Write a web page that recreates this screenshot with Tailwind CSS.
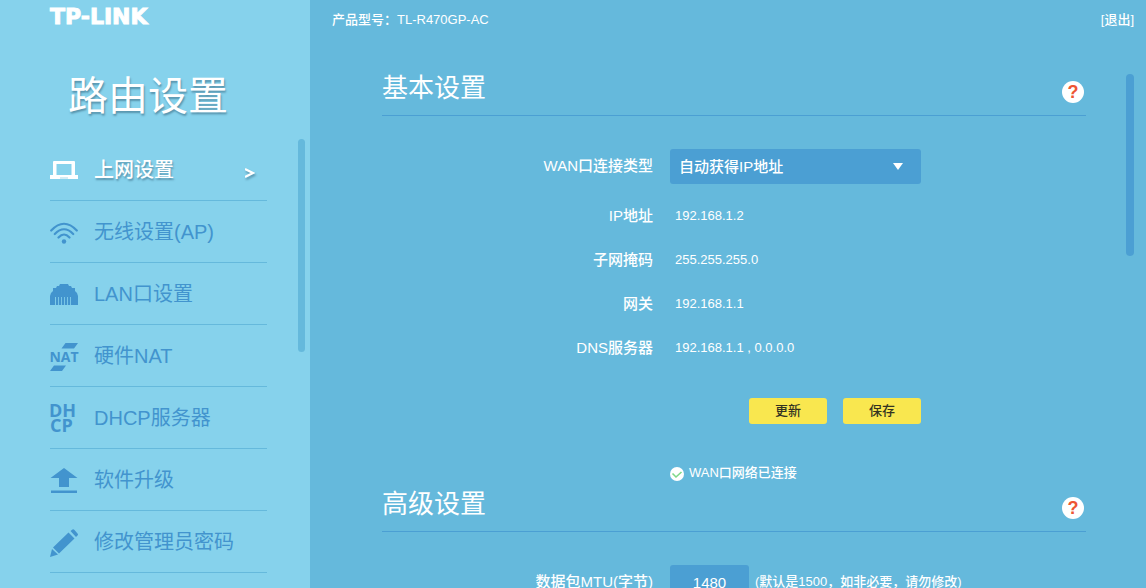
<!DOCTYPE html>
<html lang="zh-CN">
<head>
<meta charset="utf-8">
<meta name="viewport" content="width=device-width, initial-scale=1">
<title>路由设置</title>
<script src="https://cdn.jsdelivr.net/npm/@tailwindcss/browser@4"></script>
</head>
<body class="flex h-screen overflow-hidden bg-[#65b9dc] font-['Liberation_Sans','Noto_Sans_CJK_SC',sans-serif] text-white">

<aside class="relative w-[310px] shrink-0 overflow-hidden bg-[#86d2ec] pr-[43px] pl-[50px]">
  <div class="pt-1 font-['DejaVu_Sans'] text-[22px] leading-[26px] font-bold [-webkit-text-stroke:1px_white]">TP-LINK</div>
  <h1 class="pt-9 pb-[13px] pl-[18px] text-[40px] leading-[60px] [text-shadow:1px_2px_2px_#5793ac]">路由设置</h1>
  <nav class="text-[20px] leading-[30px] text-[#4294ce]" aria-label="路由设置">
    <a href="#" class="flex h-[62px] items-center border-b border-[#65b9dc] font-medium text-white [text-shadow:1px_2px_2px_#5793ac]" aria-current="page">
      <svg class="mt-1 mr-4 size-7" viewBox="0 0 28 28" aria-hidden="true"><path fill="white" fill-rule="evenodd" d="M4 3h20q1 0 1 1v13h3v4H0v-4h3V4q0-1 1-1zM6.500 6v11h15V6z"/><path d="M10 19.500h8v1h-8z" fill="#a8d8ea"/></svg>
      <span class="grow">上网设置</span>
      <svg class="mt-[6px] mr-3 h-3 w-[10px] drop-shadow-[1px_2px_1px_#5793ac]" viewBox="0 0 10 12" aria-hidden="true"><path d="M0 2l8 4-8 4" fill="none" stroke="white" stroke-width="2.200"/></svg>
    </a>
    <a href="#" class="flex h-[62px] items-center border-b border-[#65b9dc]">
      <svg class="mt-1 mr-4 size-7" viewBox="0 0 28 28" aria-hidden="true" fill="none" stroke="#4294ce" stroke-width="2.200" stroke-linecap="round"><path d="M1.200 10.500Q14 -3 26.800 10.500M4.800 14Q14 4.500 23.200 14M8.500 17.500Q14 11.500 19.500 17.500"/><circle cx="14" cy="21.500" r="2.200" fill="#4294ce" stroke="none"/></svg>
      <span>无线设置(AP)</span>
    </a>
    <a href="#" class="flex h-[62px] items-center border-b border-[#65b9dc]">
      <svg class="mt-1 mr-4 size-7" viewBox="0 0 28 28" aria-hidden="true"><path fill="#4294ce" d="M10 2h8l1 2h2l1 2h3v3l2 2 1 3v9h-5v-8H5v8H0v-9l1-3 2-2V6h3l1-2h2z"/><path stroke="#4294ce" stroke-width="2.200" d="M7 14v9M10 14v9M13 14v9M16 14v9M19 14v9M22 14v9"/></svg>
      <span>LAN口设置</span>
    </a>
    <a href="#" class="flex h-[62px] items-center border-b border-[#65b9dc]">
      <svg class="mt-[2px] mr-4 size-7 overflow-visible" viewBox="0 0 28 28" aria-hidden="true" fill="#4294ce"><path d="M15.500 0H28l-4 5.500H11.500zM4 22.500h12L12 28H0z"/><text x="14" y="19" text-anchor="middle" font-family="Open Sans" font-weight="700" font-size="14">NAT</text></svg>
      <span>硬件NAT</span>
    </a>
    <a href="#" class="flex h-[62px] items-center border-b border-[#65b9dc]">
      <svg class="mr-4 size-7 overflow-visible" viewBox="0 0 28 28" aria-hidden="true" fill="#4294ce"><text font-family="Open Sans" font-weight="700" font-size="18"><tspan x="-1" y="13">DH</tspan><tspan x="0" y="28">CP</tspan></text></svg>
      <span>DHCP服务器</span>
    </a>
    <a href="#" class="flex h-[62px] items-center border-b border-[#65b9dc]">
      <svg class="mt-1 mr-4 size-7" viewBox="0 0 28 28" aria-hidden="true" fill="#4294ce"><path d="M14 0L27.500 10H19v9H9v-9H.5zM1 22.500h26V25H1z"/></svg>
      <span>软件升级</span>
    </a>
    <a href="#" class="flex h-[62px] items-center border-b border-[#65b9dc]">
      <svg class="mt-[2px] mr-4 size-7" viewBox="0 0 28 28" aria-hidden="true" fill="#4294ce"><path d="M20.500 2l2-1.500q1-.5 2 .5l3 3.500q1 1 0 2l-1.500 1.500zM18.500 3.500L24.500 9.500 9 24.500 3 18.500zM2 20l6 5.500L0 28z"/></svg>
      <span>修改管理员密码</span>
    </a>
  </nav>
  <div class="absolute top-[139px] right-[5px] h-[213px] w-[7px] rounded-full bg-[#65b9dc]"></div>
</aside>

<main class="relative min-w-0 grow overflow-hidden">
  <header class="flex h-10 items-center justify-between pr-3 pl-[22px] text-[13px] leading-5 font-medium">
    <p>产品型号：TL-R470GP-AC</p>
    <a href="#">[退出]</a>
  </header>

  <div class="pr-[60px] pl-[72px]">
    <section class="pt-7">
      <div class="flex h-12 items-start justify-between border-b border-[#4b9fd3]">
        <h2 class="text-[26px] leading-[40px]">基本设置</h2>
        <button type="button" aria-label="基本设置帮助" class="mt-[13px] mr-[2px] size-[22px] rounded-full bg-white text-[18px] leading-[22px] font-bold text-[#ee5533]">?</button>
      </div>
      <form class="grid grid-cols-[271px_1fr] gap-x-[17px] pt-[33px] text-[15px] leading-[22px] font-medium">
        <label for="wan-type" class="pt-[6px] text-right">WAN口连接类型</label>
        <div class="relative mb-[10px] h-[35px] w-[251px]">
          <select id="wan-type" class="size-full appearance-none rounded-[3px] bg-[#4b9fd3] pl-[9px]">
            <option>自动获得IP地址</option>
          </select>
          <svg class="pointer-events-none absolute top-[14px] right-[18px] h-2 w-[10px]" viewBox="0 0 10 8" aria-hidden="true"><path d="M0 0h10L5 7z" fill="white"/></svg>
        </div>
        <div class="h-11 pt-[11px] text-right">IP地址</div>
        <output class="h-11 pt-[11px] pl-[5px] text-[13px]">192.168.1.2</output>
        <div class="h-11 pt-[11px] text-right">子网掩码</div>
        <output class="h-11 pt-[11px] pl-[5px] text-[13px]">255.255.255.0</output>
        <div class="h-11 pt-[11px] text-right">网关</div>
        <output class="h-11 pt-[11px] pl-[5px] text-[13px]">192.168.1.1</output>
        <div class="h-11 pt-[11px] text-right">DNS服务器</div>
        <output class="h-11 pt-[11px] pl-[5px] text-[13px]">192.168.1.1 , 0.0.0.0</output>
        <div class="col-start-2 flex w-[251px] justify-end gap-4 pt-7 text-[13px] text-[#333322]">
          <button type="button" class="h-[26px] w-[78px] rounded-[3px] bg-[#f9e74f]">更新</button>
          <button type="button" class="h-[26px] w-[78px] rounded-[3px] bg-[#f9e74f]">保存</button>
        </div>
        <div class="col-start-2 flex items-center gap-[5px] pt-[38px] text-[13px]">
          <svg class="mt-[2px] size-[14px]" viewBox="0 0 14 14" aria-hidden="true"><circle cx="7" cy="7" r="7" fill="white"/><path d="M2.500 6.500L6 10l5.500-5" fill="none" stroke="#7fd98a" stroke-width="1.600"/></svg>
          <span>WAN口网络已连接</span>
        </div>
      </form>
    </section>

    <section>
      <div class="flex h-12 items-start justify-between border-b border-[#4b9fd3]">
        <h2 class="text-[26px] leading-[40px]">高级设置</h2>
        <button type="button" aria-label="高级设置帮助" class="mt-[13px] mr-[2px] size-[22px] rounded-full bg-white text-[18px] leading-[22px] font-bold text-[#ee5533]">?</button>
      </div>
      <form class="grid grid-cols-[271px_1fr] gap-x-[17px] pt-[33px] text-[15px] leading-[22px] font-medium">
        <label for="mtu" class="pt-[6px] text-right">数据包MTU(字节)</label>
        <div class="flex gap-[6px]">
          <input id="mtu" type="text" value="1480" class="h-[35px] w-[79px] rounded-[3px] bg-[#4b9fd3] text-center">
          <span class="pt-[6px] text-[13px]">(默认是1500，如非必要，请勿修改)</span>
        </div>
      </form>
    </section>
  </div>
  <div class="absolute top-[74px] right-3 h-[182px] w-2 rounded-full bg-[#4b9fd3]"></div>
</main>
</body>
</html>
